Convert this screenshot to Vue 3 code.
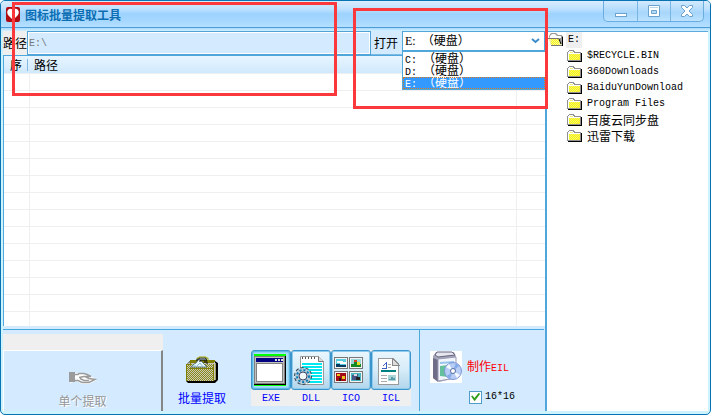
<script setup>
import { ref } from 'vue'

const path = ref('E:\\')
const drive = ref('E:')
const size16 = ref(true)
const drives = ['C:', 'D:', 'E:']
const folders = [
  { name: '$RECYCLE.BIN', latin: true },
  { name: '360Downloads', latin: true },
  { name: 'BaiduYunDownload', latin: true },
  { name: 'Program Files', latin: true },
  { name: '百度云同步盘', latin: false },
  { name: '迅雷下载', latin: false },
]

// Rows for a checkerboard drawn as 1px dashes; every row starts one pixel off the previous one.
function dither(x, y, width, height) {
  let d = ''
  for (let row = 0; row < height; row++) {
    const shift = row % 2
    d += `M${x + shift} ${y + row + 0.5}h${width - shift}`
  }
  return d
}
const folderDots = dither(2, 5, 11, 6)
const rootDots = dither(3, 6, 8, 6)
const bagDots = dither(1, 8, 26, 17)
</script>

<template>
  <div class="window">
    <header class="titlebar">
      <svg class="app-icon" width="14" height="15" viewBox="0 0 14 15">
        <rect width="14" height="15" rx="2" fill="#b00b12" />
        <path d="M7 13 L2 8 Q0 4 3 2 Q5 1 7 3 Q9 1 11 2 Q14 4 12 8Z" fill="#fff" />
        <path d="M7 2v4" stroke="#d22" stroke-width="1" />
      </svg>
      <h1>图标批量提取工具</h1>
      <div class="controls">
        <button type="button" aria-label="最小化">
          <svg width="14" height="14" viewBox="0 0 14 14"><rect x="1.500" y="9.500" width="11" height="3" fill="#fff" stroke="#6ba3ce" /></svg>
        </button>
        <button type="button" aria-label="最大化">
          <svg width="14" height="14" viewBox="0 0 14 14" fill="#fff" stroke="#6ba3ce"><path d="M1.500 1.500h11v11h-11z" /><path d="M4.500 6.500h5v3h-5z" fill="#b4dcf8" /><path d="M3 3.500h8" stroke="#b9d7ec" /></svg>
        </button>
        <button type="button" aria-label="关闭">
          <svg width="14" height="14" viewBox="0 0 14 14"><path d="M1.500 1.500h3L7 4l2.500-2.500h3v2L9 7l3.500 3.500v2h-3L7 10l-2.500 2.500h-3v-2L5 7 1.500 3.500z" fill="#fff" stroke="#6ba3ce" /></svg>
        </button>
      </div>
    </header>

    <main class="body">
      <section class="left">
        <div class="toolbar">
          <label class="path-label" for="path">路径</label>
          <input id="path" v-model="path" class="path-input" type="text" />
          <label class="open-label" for="drive">打开</label>
          <div class="combo">
            <select id="drive" v-model="drive">
              <option v-for="d in drives" :key="d" :value="d">{{ d }}&nbsp;&nbsp;（硬盘）</option>
            </select>
            <svg class="arrow" width="9" height="6" viewBox="0 0 9 6"><path d="M1 1l3.500 3L8 1" fill="none" stroke="#3b8ccc" stroke-width="2" /></svg>
            <ul class="menu">
              <li v-for="d in drives" :key="d" :class="{ selected: d === drive }" @click="drive = d"><span class="latin">{{ d }}&nbsp;</span>（硬盘）</li>
            </ul>
          </div>
        </div>

        <div class="list">
          <table>
            <colgroup><col class="c-no" /><col /><col class="c-end" /></colgroup>
            <thead>
              <tr><th><span>序</span></th><th>路径</th><th></th></tr>
            </thead>
            <tbody>
              <tr v-for="n in 15" :key="n"><td></td><td></td><td></td></tr>
            </tbody>
          </table>
        </div>

        <footer class="actions">
          <div class="single">
            <div class="strip"></div>
            <button type="button" class="single-btn" disabled>
              <svg width="28" height="14" viewBox="0 0 28 14">
                <path d="M1 2h6l13 2 8 5-8 4h-7l-6-3-6 2z" fill="#fff" />
                <path d="M0 1h6v10H0z" fill="#9b9b9b" />
                <path d="M6 3.500h3l1-1h5l3 1 4 2h-7l-5 1M6 9.500h3l4 2h7l6-3-6-1-4-2M20 9.500h-5l-4-2" fill="none" stroke="#9b9b9b" stroke-width="1.500" />
              </svg>
              <span>单个提取</span>
            </button>
          </div>

          <button type="button" class="batch">
            <svg width="32" height="27" viewBox="0 0 32 27">
              <path d="M4 5h25l3 2v17l-3 3H2l-2-2V9z" fill="#000" />
              <path d="M4 4h25v2H4zM0 8h1v17H0z" fill="#808000" />
              <path d="M1 8l3-2h25v18l-2 1H1z" fill="#c8c8c0" />
              <path :d="bagDots" stroke="#8c8c14" stroke-dasharray="1 1" />
              <path d="M0 8h4V6h24v1H5v2H1zM3 12h24v1H3zM27 8h1v17h-1z" fill="#808000" />
              <path d="M29 7h1v17h-1z" fill="#a0a060" />
              <path d="M5 11l3-3 2-1 3-4 3 3 5 5z" fill="#e9f7ff" stroke="#607878" />
              <path d="M11 10l3-3 3 4M7 10h3" fill="none" stroke="#80bdd0" />
              <path d="M11 5V3h2V2h7v2h1v4M19 7V4h-5v2" fill="none" stroke="#000" />
              <path d="M11 3V2h2V1h7v1h2v4" fill="none" stroke="#a0a000" />
            </svg>
            <span>批量提取</span>
          </button>

          <div class="types">
            <button type="button" class="type active">
              <span class="face">
                <svg width="32" height="32" viewBox="0 0 32 32" shape-rendering="crispEdges">
                  <path d="M0 0h32v32H0z" fill="#00ff00" /><path d="M0 2h32v28H0z" fill="#808080" /><path d="M31 2v28H0" fill="none" stroke="#000" />
                  <path d="M1 3h29v26H1z" fill="#c0c0c0" /><path d="M2 4h27v4H2z" fill="#000080" />
                  <path d="M21 5h2v2h-2zM24 5h2v2h-2zM27 5h2v2h-2z" fill="#ddd" />
                  <path d="M2 9h27v19H2z" fill="#808080" /><path d="M3 10h25v17H3z" fill="#fff" />
                </svg>
              </span>
              <span class="name">EXE</span>
            </button>
            <button type="button" class="type">
              <span class="face">
                <svg width="32" height="32" viewBox="0 0 32 32">
                  <path d="M6.500 2.500h18l5 5v23h-23z" fill="#fff" stroke="#999" />
                  <path d="M24.500 2.500v5h5" fill="#ddd" stroke="#777" />
                  <path d="M8 10h20M8 13h20M8 16h20M8 19h20M8 22h20M8 25h20M8 28h20" stroke="#00e8f0" stroke-width="2" />
                  <path d="M8 4h1M11 4h1M14 4h1M17 4h1M20 4h1" stroke="#555" stroke-width="2" />
                  <circle cx="9" cy="22" r="8" fill="none" stroke="#345" stroke-width="2" stroke-dasharray="3 2" />
                  <circle cx="9" cy="22" r="6" fill="none" stroke="#b4cbd6" stroke-width="4" />
                  <circle cx="9" cy="22" r="6" fill="none" stroke="#087bb8" stroke-width="2" stroke-dasharray="2 2" />
                  <circle cx="9" cy="22" r="4" fill="#f0f8fa" stroke="#446" />
                </svg>
              </span>
              <span class="name">DLL</span>
            </button>
            <button type="button" class="type">
              <span class="face">
                <svg width="32" height="32" viewBox="0 0 32 32" shape-rendering="crispEdges">
                  <path d="M0 3h14v12H0zM15 3h14v12H15zM0 17h14v12H0zM15 17h14v12H15z" fill="#777" />
                  <path d="M1 4h12v10H1zM16 4h12v10H16zM1 18h12v10H1zM16 18h12v10H16z" fill="#f4f4f4" />
                  <path d="M2 5h10v8H2z" fill="#56cde0" /><path d="M3 7h6v1h3v2H6V9H3z" fill="#fff" /><path d="M2 10h4v1h6v2H2z" fill="#063b60" />
                  <path d="M17 5h10v8H17z" fill="#9bd7d9" /><path d="M17 10h3V8h3v2h4v3H17z" fill="#138824" /><path d="M20 6h3v2h-3z" fill="#d42" /><path d="M23 8h3v3h-3z" fill="#e9df20" />
                  <path d="M2 19h10v8H2z" fill="#a50b12" /><path d="M3 20h3v2H3zM8 22h3v3H8z" fill="#eac620" /><path d="M5 24h2v3H5z" fill="#220" />
                  <path d="M17 19h10v8H17z" fill="#45b6c0" /><path d="M18 21h2v-1h4v3h-2v3h-4z" fill="#4a5385" /><path d="M22 23h4v3h-4z" fill="#222" /><path d="M20 20h3v2h-3z" fill="#ddd" />
                </svg>
              </span>
              <span class="name">ICO</span>
            </button>
            <button type="button" class="type">
              <span class="face">
                <svg width="32" height="32" viewBox="0 0 32 32" shape-rendering="crispEdges">
                  <path d="M4 4h15l6 6v21H4z" fill="#999" /><path d="M5 5h13v6h6v19H5z" fill="#fff" /><path d="M18 4v7h7z" fill="#ddd" stroke="#888" />
                  <path d="M9 12l3-3v5M8 14h5" fill="none" stroke="#3a60c5" /><path d="M14 10h3M14 13h3M7 21h6M7 24h6M7 27h6" stroke="#aaa" />
                  <path d="M7 16h15v2H7z" fill="#008080" /><path d="M14 21h8v6h-8z" fill="#a9d3d7" /><path d="M15 25h2v-2h2v1h2v2h-6z" fill="#5b9da7" />
                </svg>
              </span>
              <span class="name">ICL</span>
            </button>
          </div>

          <div class="make">
            <button type="button" class="make-btn">
              <svg width="32" height="32" viewBox="0 0 32 32">
                <path d="M0 0h32v32H0z" fill="#fff" />
                <path d="M3 5l3-4h18l2 4v22l-17 4-6-4z" fill="#a6a6ba" />
                <path d="M3 7l5 2v22l-5-4z" fill="#6e6e88" />
                <path d="M8 8l18-2v21L8 30z" fill="#f1f5fb" stroke="#9a9ab2" />
                <path d="M5 4l2-3h15l3 3-17 2z" fill="#e6e6ef" stroke="#66667e" />
                <path d="M10 11l14-1v2l-14 1z" fill="#98c5ec" /><path d="M10 15l8-1v12l-8-1z" fill="#64c09c" />
                <circle cx="23" cy="20" r="8.500" fill="#b7cdf5" stroke="#7c96d8" />
                <path d="M23 20l-7-4 3-3zM23 20l7 4-3 3z" fill="#f4f8ff" /><path d="M23 20l3-8 3 3zM23 20l-3 8-3-3z" fill="#86abe8" />
                <circle cx="23" cy="20" r="2.500" fill="#fff" stroke="#526c9d" />
              </svg>
              <span>制作<span class="latin">EIL</span></span>
            </button>
            <label class="check">
              <input v-model="size16" type="checkbox" />
              <span class="latin">16*16</span>
            </label>
          </div>
        </footer>
      </section>

      <aside class="tree">
        <div class="root">
          <svg width="16" height="14" viewBox="0 0 16 14">
            <path d="M2 3l2-2h4l2 2h4l1 1v9H4z" fill="#000" />
            <path d="M1 3l2-3h5l2 2h4v9l-1 1H3z" fill="#999" />
            <path d="M2 3l2-2h3l2 2h4v2H2z" fill="#fff" />
            <path d="M0 5h11l3 7H3z" fill="#f0f0a8" />
            <path :d="rootDots" stroke="#ffff00" stroke-dasharray="1 1" />
            <path d="M0 5h11v1H0zM3 12h11v1H3z" fill="#777" />
            <path d="M11 6l2 5" stroke="#000" fill="none" />
          </svg>
          <span class="latin root-name">E:</span>
        </div>
        <ul>
          <li v-for="f in folders" :key="f.name">
            <svg width="15" height="14" viewBox="0 0 15 14">
              <path d="M1 4h14v9H1z" fill="#000" />
              <path d="M0 3h1V2h1V1h5v1h1v1h6v9H0z" fill="#909090" />
              <path d="M1 3h1V2h4v1h1v1h6v7H1z" fill="#fff" />
              <path d="M2 5h11v6H2zM3 3h3v1H3z" fill="#ecec78" />
              <path :d="folderDots" stroke="#ffff00" stroke-dasharray="1 1" />
            </svg>
            <span :class="{ latin: f.latin }">{{ f.name }}</span>
          </li>
        </ul>
      </aside>
    </main>

    <div class="mark mark-path"></div>
    <div class="mark mark-drive"></div>
  </div>
</template>

<style>
body { background: #fff; }
</style>

<style scoped>
* { box-sizing: border-box; }
.window {
  position: relative;
  display: flex;
  flex-direction: column;
  height: 100vh;
  border: 1px solid #0873b3;
  border-radius: 5px;
  padding: 0 2px 3px;
  background: #cdf3ff;
  overflow: hidden;
  color: #000;
  font: 12px/16px "Noto Sans CJK SC", sans-serif;
}
button { font: inherit; padding: 0; border: 0; background: none; }
ul { list-style: none; margin: 0; padding: 0; }
svg { display: block; flex: none; }
.latin { font-family: "Liberation Mono", monospace; font-size: 10px; white-space: pre; }

.titlebar {
  display: flex;
  flex: none;
  height: 30px;
  margin: 0 -2px;
  padding: 0 6px 4px 5px;
  align-items: center;
  background: linear-gradient(#d8edff 0, #bfe1ff 8px, #9dd3ff 13px, #a6d8ff 20px, #b5dfff 26px, #4b9cd8 26px, #4b9cd8 27px, #a8daff 27px, #d4f0ff 30px);
}
.titlebar h1 { flex: 1; margin: 2px 0 0 5px; font-size: 12px; line-height: 16px; font-weight: 700; color: #0b6eb3; }
.controls {
  display: flex;
  align-self: flex-start;
  border: 1px solid #6caddf;
  border-top: 0;
  border-radius: 0 0 5px 5px;
  background: linear-gradient(#d2eaff, #a7d6fb 60%, #bde2ff);
}
.controls button { display: grid; place-items: center; width: 33px; height: 20px; }
.controls button + button { border-left: 1px solid #7ab6e3; }

.body { display: flex; flex: 1; min-height: 0; }
.left { display: flex; flex: 1; flex-direction: column; min-width: 0; background: #d4ebff; border-right: 2px solid #4fa7db; }

.toolbar { display: flex; flex: none; height: 24px; line-height: 24px; }
.path-label { width: 24px; background: #efefef; }
.path-input {
  flex: 1;
  min-width: 0;
  padding: 0 1px;
  border: 1px solid #4fa3d6;
  outline: 1px solid #fff;
  outline-offset: -2px;
  background: #d4ebff;
  color: #777;
  font: 10px "Liberation Mono", monospace;
}
.open-label { width: 31px; padding-left: 3px; border-bottom: 1px solid #7ab9e3; }
.combo { position: relative; width: 143px; }
.combo select {
  display: block;
  width: 100%;
  height: 21px;
  padding: 0 2px;
  border: 1px solid #4fa7db;
  border-bottom-width: 2px;
  border-radius: 0;
  appearance: none;
  background: #fff;
  color: #000;
  font: 12px "Liberation Serif", "Noto Sans CJK SC", serif;
}
.arrow { position: absolute; right: 5px; top: 7px; pointer-events: none; }
.menu {
  position: absolute;
  z-index: 1;
  top: 21px;
  left: 0;
  right: 0;
  padding-top: 1px;
  border: solid #4fa7db;
  border-width: 0 0 1px 1px;
  background: #fff;
}
.menu li { height: 12px; padding-left: 2px; line-height: 10px; white-space: nowrap; }
.menu .selected { background: #3399ff; color: #fff; outline: 1px dotted #d77a20; outline-offset: -1px; }

.list { flex: 1; min-height: 0; overflow: hidden; background: #fff; border: solid #4fa7db; border-width: 1px 0 0 1px; }
table { width: 100%; table-layout: fixed; border-collapse: separate; border-spacing: 0; }
.c-no { width: 26px; }
.c-end { width: 28px; }
th, td { height: 17px; padding: 0; border-bottom: 1px solid #efefef; }
td { border-right: 1px solid #efefef; }
td:last-child { border-right: 0; }
thead tr { background: linear-gradient(#e8f5ff, #cfe8fc); }
th { height: 18px; line-height: 16px; font-weight: 400; text-align: left; padding-left: 4px; }
th span { display: block; width: 20px; line-height: 12px; border-right: 1px solid #85bbe3; padding-left: 2px; }

.actions {
  display: flex;
  flex: none;
  height: 85px;
  margin-right: 1px;
  background: linear-gradient(#d4ebff 3px, #47a8df 3px, #47a8df 4px, #d4ebff 4px);
}
.single { display: flex; flex-direction: column; width: 160px; padding-top: 8px; }
.strip { height: 16px; background: #efefef; }
.single-btn {
  display: flex;
  flex: 1;
  flex-direction: column;
  align-items: center;
  padding: 20px 0 0;
  gap: 8px;
  border: solid;
  border-width: 1px 2px 0 1px;
  border-color: #fff #858585 #fff #fff;
  color: #969696;
  text-shadow: 1px 1px #fff;
}
.batch { display: flex; flex-direction: column; align-self: flex-start; align-items: center; gap: 7px; margin: 30px 0 0 15px; color: #00f; }
.types { display: flex; align-self: flex-start; margin: 24px 0 0 25px; }
.type { width: 40px; background: #efefef; color: #00f; }
.face {
  display: grid;
  height: 40px;
  padding: 3px 2px;
  border: 1px solid #3b94ca;
  border-radius: 3px;
  box-shadow: inset 0 0 0 1px #8dcbef;
  background: linear-gradient(#eaf6fd, #d6ecf8 50%, #b1d5eb);
}
.active .face { box-shadow: inset 0 0 2px 1px #45a8dd; background: #aee2fb; }
.name { display: block; padding-top: 1px; font: 10px/15px "Liberation Mono", monospace; }
.make { flex: 1; margin: 4px 0 0 8px; padding: 21px 0 0 10px; border-left: 1px solid #4fa7db; }
.make-btn { display: flex; align-items: center; gap: 5px; color: #f00; white-space: nowrap; }
.check { display: flex; align-items: center; gap: 3px; margin: 6px 0 0 39px; }
.check input {
  display: grid;
  place-items: center;
  width: 13px;
  height: 13px;
  margin: 0;
  appearance: none;
  border: 1px solid #4f9ccb;
  background: #fff;
}
.check input:checked::after {
  content: "";
  width: 9px;
  height: 9px;
  background: #2f9e1c;
  clip-path: polygon(0 42%, 16% 32%, 38% 60%, 86% 4%, 100% 18%, 40% 96%);
}

.tree { width: 161px; flex: none; padding-left: 1px; border-top: 1px solid #5aa9df; background: #fff; }
.root { display: flex; align-items: center; gap: 2px; height: 16px; }
.root-name { padding: 0 2px; background: #efefef; }
.tree li { display: flex; align-items: center; gap: 5px; height: 16px; padding-left: 19px; }

.mark { position: absolute; z-index: 2; border: 3px solid #fb383b; pointer-events: none; }
.mark-path { left: 11px; top: 1px; width: 325px; height: 94px; }
.mark-drive { right: 162px; top: 7px; width: 195px; height: 101px; }
</style>
